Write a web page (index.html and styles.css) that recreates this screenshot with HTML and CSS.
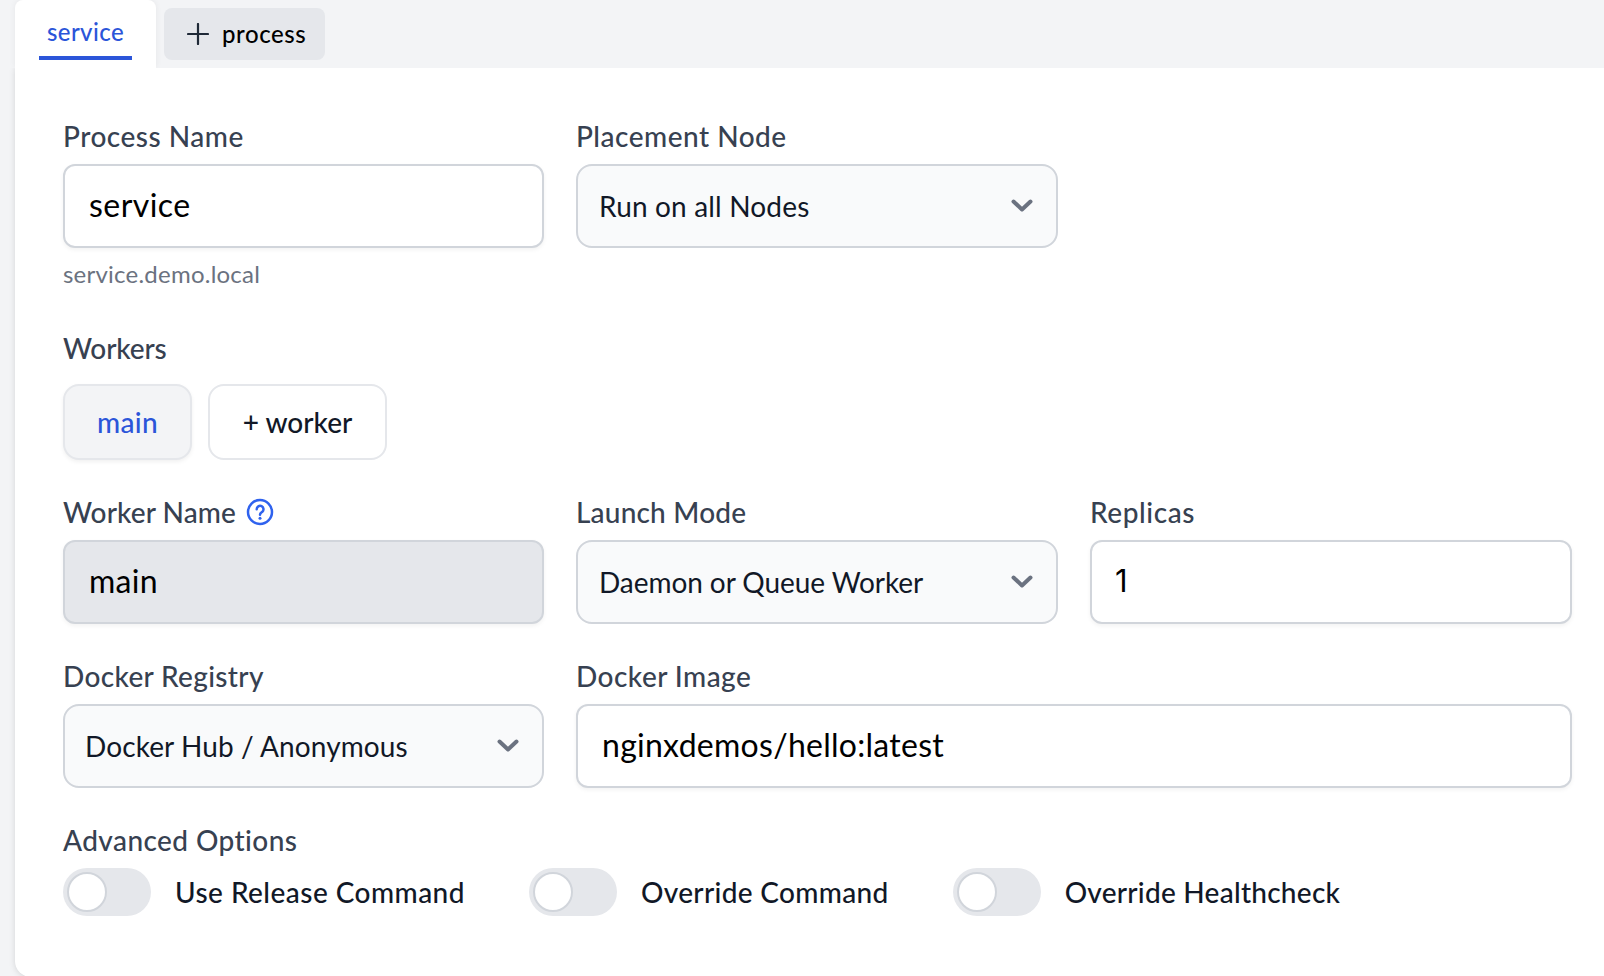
FILE: index.html
```
<!DOCTYPE html>
<html lang="en">
<head>
<meta charset="utf-8">
<title>Service processes</title>
<link rel="stylesheet" href="styles.css">
</head>
<body>
<nav class="tabs">
  <a class="tab"><span class="tab-label"><span class="t t-tab">service</span></span></a>
  <button class="add-process">
    <svg class="plus" viewBox="0 0 22 22"><path d="M11 1v20M1 11h20"/></svg>
    <span class="t t-process">process</span>
  </button>
</nav>
<main class="card">
  <section class="row row-process">
    <div class="field">
      <div class="label"><span class="t l-process">Process Name</span></div>
      <div class="input"><span class="t i-service">service</span></div>
      <div class="hint"><span class="t t-hint">service.demo.local</span></div>
    </div>
    <div class="field">
      <div class="label"><span class="t l-placement">Placement Node</span></div>
      <div class="select"><span class="t s-nodes">Run on all Nodes</span><svg class="chevron" viewBox="0 0 22 14"><path d="M2.500 2.500 11 10.500l8.500-8"/></svg></div>
    </div>
  </section>
  <section class="workers">
    <div class="label"><span class="t l-workers">Workers</span></div>
    <div class="pills">
      <button class="pill pill-active"><span class="t p-main">main</span></button>
      <button class="pill pill-add"><span class="t p-add">+ worker</span></button>
    </div>
  </section>
  <section class="row row-worker">
    <div class="field">
      <div class="label"><span class="t l-wname">Worker Name</span><svg class="help" viewBox="0 0 28 28"><circle cx="14" cy="14" r="12"/><path d="M10.700 11.200a3.400 3.400 0 1 1 5.500 2.700c-1.300.9-2.200 1.400-2.200 2.900"/><circle class="dot" cx="14" cy="20.200" r="1.500"/></svg></div>
      <div class="input input-disabled"><span class="t i-main">main</span></div>
    </div>
    <div class="field">
      <div class="label"><span class="t l-launch">Launch Mode</span></div>
      <div class="select"><span class="t s-daemon">Daemon or Queue Worker</span><svg class="chevron" viewBox="0 0 22 14"><path d="M2.500 2.500 11 10.500l8.500-8"/></svg></div>
    </div>
    <div class="field">
      <div class="label"><span class="t l-replicas">Replicas</span></div>
      <div class="input"><span class="t i-one">1</span></div>
    </div>
  </section>
  <section class="row row-docker">
    <div class="field">
      <div class="label"><span class="t l-registry">Docker Registry</span></div>
      <div class="select"><span class="t s-hub">Docker Hub / Anonymous</span><svg class="chevron" viewBox="0 0 22 14"><path d="M2.500 2.500 11 10.500l8.500-8"/></svg></div>
    </div>
    <div class="field field-wide">
      <div class="label"><span class="t l-image">Docker Image</span></div>
      <div class="input"><span class="t i-image">nginxdemos/hello:latest</span></div>
    </div>
  </section>
  <section class="advanced">
    <div class="label"><span class="t l-adv">Advanced Options</span></div>
    <div class="toggles">
      <div class="option"><span class="switch"><span class="knob"></span></span><span class="t o-release">Use Release Command</span></div>
      <div class="option"><span class="switch"><span class="knob"></span></span><span class="t o-command">Override Command</span></div>
      <div class="option"><span class="switch"><span class="knob"></span></span><span class="t o-health">Override Healthcheck</span></div>
    </div>
  </section>
</main>
</body>
</html>
```
FILE: styles.css
```
* { box-sizing: border-box; }
body {
  margin: 0;
  height: 976px;
  overflow: hidden;
  background: #f3f4f6;
  font-family: Lato, "Liberation Sans", sans-serif;
  font-weight: 500;
  font-variant-ligatures: none;
  color: #111827;
}
button { font: inherit; border: 0; padding: 0; color: inherit; }
.t { white-space: nowrap; }
.tabs { display: flex; height: 68px; padding-left: 15px; gap: 8px; }
.tab {
  width: 141px;
  padding: 0 24px;
  background: #fff;
  border-radius: 8px 8px 0 0;
  box-shadow: 0 0 6px rgba(0, 0, 0, .06);
  color: #2b55d9;
  font-size: 24px;
}
.tab-label { display: flex; justify-content: center; align-items: center; height: 60px; padding-top: 6px; border-bottom: 4px solid #2b55d9; }
.add-process {
  display: flex;
  align-items: center;
  width: 161px;
  height: 52px;
  margin-top: 8px;
  padding: 0 0 2px 23px;
  gap: 13px;
  border-radius: 8px;
  background: #e5e7eb;
  color: #000;
  font-size: 24px;
}
.plus { width: 22px; height: 22px; margin-top: 1px; fill: none; stroke: #1f2937; stroke-width: 2.2; stroke-linecap: round; }
.card {
  position: relative;
  width: 1605px;
  height: 909px;
  margin-left: 15px;
  padding: 48px 48px 0;
  background: #fff;
  border-radius: 0 0 16px 16px;
  box-shadow: 0 1px 6px rgba(0, 0, 0, .13);
  clip-path: inset(0 0 -10px -15px);
}
.row { display: grid; grid-template-columns: 481px 482px 482px; column-gap: 32px; }
.field-wide { grid-column: span 2; }
.row-process { height: 212px; }
.label { display: flex; align-items: center; height: 40px; margin-bottom: 8px; color: #374151; font-size: 28px; line-height: 40px; }
.input, .select { display: flex; align-items: center; height: 84px; border: 2px solid #d1d5db; }
.input { padding: 0 24px 3px; border-radius: 12px; background: #fff; box-shadow: 0 2px 4px rgba(0, 0, 0, .05); color: #000; font-size: 32px; font-weight: 400; }
.input-disabled { background: #e5e7eb; }
.select { justify-content: space-between; padding: 0 23px 1px 21px; border-radius: 16px; background: #f9fafb; font-size: 28px; font-weight: 400; }
.chevron { width: 22px; height: 14px; fill: none; stroke: #6b7280; stroke-width: 4; stroke-linecap: round; stroke-linejoin: round; }
.hint { height: 32px; margin-top: 10px; color: #6b7280; font-size: 24px; line-height: 32px; font-weight: 400; }
.workers { height: 164px; }
.workers .label { margin-bottom: 16px; }
.pills { display: flex; gap: 16px; }
.pill { height: 76px; border: 2px solid #e5e7eb; border-radius: 16px; background: #fff; font-size: 28px; }
.pill-active { width: 129px; background: #f3f4f6; color: #2b55d9; box-shadow: 0 2px 4px rgba(0, 0, 0, .06); }
.pill-add { width: 179px; }
.help { width: 28px; height: 28px; margin-left: 10px; fill: none; stroke: #2f62ee; stroke-width: 2.5; stroke-linecap: round; }
.help .dot { fill: #2f62ee; stroke: none; }
.row-worker, .row-docker { height: 164px; }
.toggles { display: flex; gap: 64px; }
.option { display: flex; align-items: center; gap: 24px; font-size: 28px; }
.switch { display: block; width: 88px; height: 48px; padding: 4px; border-radius: 24px; background: #e5e7eb; }
.knob { display: block; width: 40px; height: 40px; border: 2px solid #d1d5db; border-radius: 50%; background: #fff; }

/* Optical tracking */
.t-tab { letter-spacing: .4px; }
.t-process { letter-spacing: .55px; }
.t-hint { letter-spacing: .23px; }
.l-process { letter-spacing: .5px; }
.l-placement { letter-spacing: .5px; }
.l-workers { letter-spacing: -.15px; }
.l-wname { letter-spacing: .1px; }
.l-launch { letter-spacing: .2px; }
.l-replicas { letter-spacing: .57px; }
.l-registry { letter-spacing: .34px; }
.l-image { letter-spacing: .46px; }
.l-adv { letter-spacing: .42px; }
.i-service { letter-spacing: .45px; }
.i-main { letter-spacing: .25px; }
.i-image { letter-spacing: .27px; }
.i-one { font-family: Inter, sans-serif; font-size: 31px; margin-left: -1px; }
.s-nodes { letter-spacing: .17px; }
.s-daemon { letter-spacing: -.07px; }
.s-hub { margin-left: -1px; letter-spacing: .1px; }
.p-main { letter-spacing: .3px; }
.o-release { letter-spacing: .46px; }
.o-command { letter-spacing: .34px; }
.o-health { letter-spacing: .26px; }
```
